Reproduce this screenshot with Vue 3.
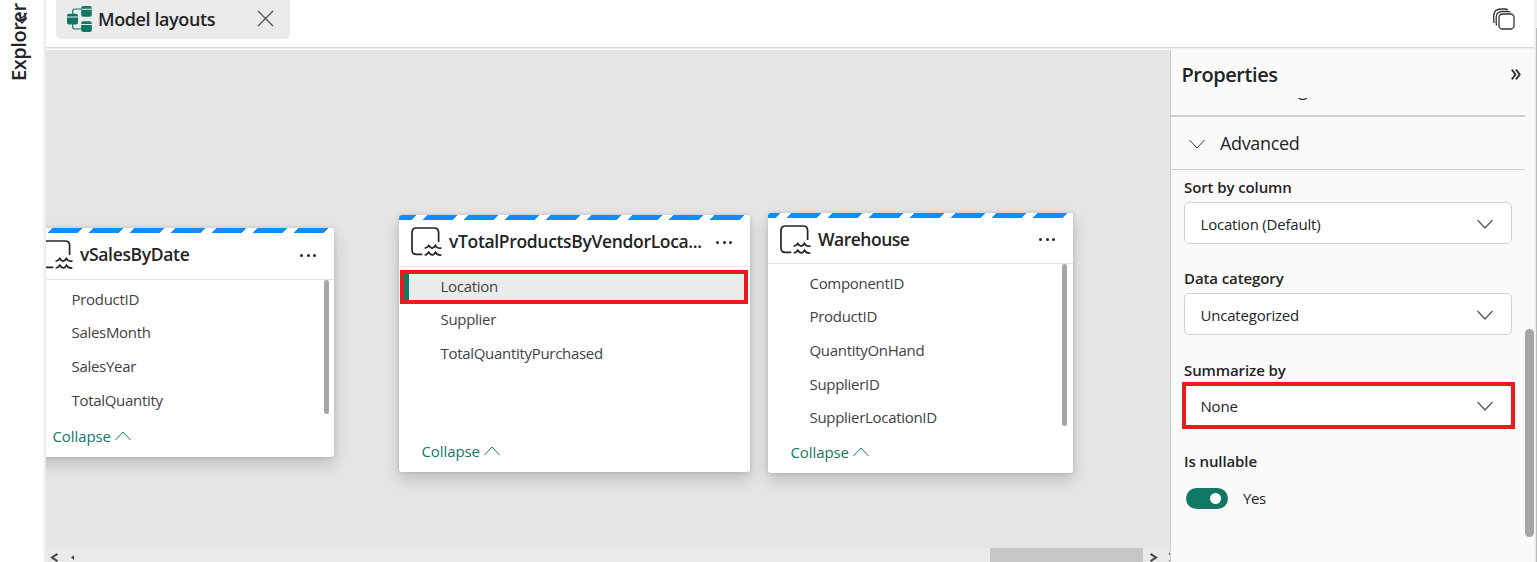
<script setup>
const tables = [
  { key: 'sales', name: 'vSalesByDate', columns: ['ProductID', 'SalesMonth', 'SalesYear', 'TotalQuantity'], scroll: true },
  { key: 'vendor', name: 'vTotalProductsByVendorLoca...', columns: ['Location', 'Supplier', 'TotalQuantityPurchased'], selected: 'Location' },
  { key: 'warehouse', name: 'Warehouse', columns: ['ComponentID', 'ProductID', 'QuantityOnHand', 'SupplierID', 'SupplierLocationID'], scroll: true },
]
const fields = [
  { label: 'Sort by column', value: 'Location (Default)' },
  { label: 'Data category', value: 'Uncategorized' },
  { label: 'Summarize by', value: 'None', marked: true },
]
</script>

<template>
  <div class="app">
    <aside class="rail">
      <span class="rail-label">Explorer</span>
      <svg class="rail-chevron" width="12" height="12" viewBox="0 0 12 12"><path d="M1 6l5 5 5-5M1 1l5 5 5-5" /></svg>
    </aside>
    <div class="main">
      <header class="topbar">
        <div class="tab">
          <svg class="model" width="25" height="26" viewBox="0 0 25 26">
            <path class="wire" d="M5.7 8V5.500q0-2.500 2.500-2.500H15M5.700 18v2.500q0 2.500 2.500 2.500H15" />
            <path d="M0 9.800q0-2 2-2h7q2 0 2 2v.7H0zM0 11.500h11v5q0 2-2 2H2q-2 0-2-2zM14.200 2q0-2 2-2h6.600q2 0 2 2v.7H14.200zM14.200 3.700h10.600v5q0 2-2 2h-6.600q-2 0-2-2zM14.200 17.300q0-2 2-2h6.600q2 0 2 2v.7H14.200zM14.200 19h10.600v5q0 2-2 2h-6.600q-2 0-2-2z" />
          </svg>
          <span class="tab-name">Model layouts</span>
          <svg class="close" width="17" height="17" viewBox="0 0 17 17"><path d="M1 1l15 15M16 1L1 16" /></svg>
        </div>
        <svg class="copies" width="22" height="22" viewBox="0 0 22 22">
          <rect x="6" y="6" width="15" height="15" rx="3.600" />
          <path d="M3.500 17.500Q3.200 16 3.200 14V9.500q0-6 6-6h4.300q2.500 0 4 .5M1 15Q.7 13.500.7 12V8.500Q.7 1 8.200 1h3.300q2.300 0 3.500.8" />
        </svg>
      </header>
      <div class="body">
        <section class="canvas">
          <article v-for="t in tables" :key="t.key" class="card" :class="t.key">
            <div class="stripe"></div>
            <div class="card-head">
              <svg class="lake" width="32" height="30" viewBox="0 0 32 30">
                <path d="M27.600 15V5.500q0-4.500-4.500-4.500H5.500Q1 1 1 5.500v17.200q0 4.700 4.500 4.700h5.800" />
                <path d="M13.600 21.200q2.500 0 4.200-2.700 2.200 3.600 4.700 2.100 1.200-.7 1.900-2.100 2 3.200 4.200 2.600M13.600 28q2.500 0 4.200-2.700 2.200 3.600 4.700 2.100 1.200-.7 1.900-2.100 2.200 3.400 6 2.700M28.600 21.100h1.900" />
              </svg>
              <span class="card-name">{{ t.name }}</span>
              <span class="more"><i></i><i></i><i></i></span>
            </div>
            <div class="columns">
              <div v-for="c in t.columns" :key="c" class="column" :class="{ selected: c === t.selected }"><span>{{ c }}</span></div>
              <div v-if="t.scroll" class="card-scroll"></div>
            </div>
            <div class="collapse">
              <span>Collapse</span>
              <svg width="16" height="10" viewBox="0 0 16 10"><path d="M.5 9L8 1l7.500 8" /></svg>
            </div>
          </article>
          <div class="hscroll">
            <svg class="arrow-left" width="9" height="9" viewBox="0 0 9 9"><path d="M7.500.8L2 4.500l5.500 3.700" /></svg>
            <svg class="tick" width="3" height="5" viewBox="0 0 3 5"><path d="M3 0v5L0 2.500z" /></svg>
            <div class="hthumb"></div>
            <svg class="arrow-right" width="9" height="9" viewBox="0 0 9 9"><path d="M1.500.8L7 4.500 1.500 8.200" /></svg>
            <div class="dots"></div>
          </div>
        </section>
        <aside class="props">
          <div class="props-head">
            <h2>Properties</h2>
            <svg width="10" height="11" viewBox="0 0 10 11"><path d="M.8.6l3.700 4.900L.8 10.400M5 .6l3.700 4.900L5 10.400" /></svg>
          </div>
          <div class="previous"><span>Formatting</span></div>
          <div class="advanced">
            <svg width="16" height="10" viewBox="0 0 16 10"><path d="M.5 1L8 9l7.500-8" /></svg>
            <span>Advanced</span>
          </div>
          <div v-for="f in fields" :key="f.label" class="field">
            <label>{{ f.label }}</label>
            <div class="select" :class="{ marked: f.marked }">
              <span>{{ f.value }}</span>
              <svg width="16" height="10" viewBox="0 0 16 10"><path d="M.5 1L8 9l7.500-8" /></svg>
            </div>
          </div>
          <div class="field">
            <label>Is nullable</label>
            <div class="toggle-row"><div class="toggle"><b></b></div><span>Yes</span></div>
          </div>
          <div class="vscroll"></div>
        </aside>
      </div>
    </div>
    <div class="edge"></div>
  </div>
</template>

<style>
body { overflow: hidden; background: #fff; }
</style>

<style scoped>
* { box-sizing: border-box; }
.app { display: flex; width: 1537px; height: 562px; overflow: hidden; font: 15px "Open Sans", "Noto Sans", sans-serif; color: #242424; background: #fff; }
svg { display: block; flex: none; fill: none; stroke: #333; overflow: visible; }
span, label, h2 { white-space: nowrap; }

.rail { position: relative; width: 46px; flex: none; background: linear-gradient(90deg, #fff 42px, #e8e8e8 46px); }
.rail-label { position: absolute; left: 4px; top: 2px; width: 29px; height: 79px; line-height: 29px; writing-mode: vertical-rl; transform: rotate(180deg); font-size: 20px; font-weight: 600; letter-spacing: -.45px; }
.rail-chevron { position: absolute; left: 16px; top: 12px; stroke-width: 1.300; }

.main { display: flex; flex-direction: column; width: 1488px; flex: none; }
.topbar { display: flex; justify-content: space-between; height: 50px; flex: none; padding: 0 19px 0 10px; background: linear-gradient(#fff 47px, #d8d8d8 47px 48px, #eee 48px 49px, #fafafa 49px); }
.tab { display: flex; align-items: center; width: 234px; height: 39px; padding-left: 11px; background: #ebebeb; border-radius: 0 0 5px 5px; }
.model { fill: #117865; stroke: none; margin-top: -1px; }
.model .wire { fill: none; stroke: #117865; stroke-width: 1.200; }
.tab-name { width: 159px; margin: -2px 0 0 6px; font-size: 18px; font-weight: 600; letter-spacing: -.4px; }
.close { stroke: #555; stroke-width: 1.400; margin-top: -3px; }
.copies { margin-top: 8px; stroke-width: 1.300; }

.body { display: flex; height: 512px; }
.canvas { position: relative; width: 1124px; height: 512px; overflow: hidden; background: #e5e5e5; }
.card { position: absolute; display: flex; flex-direction: column; background: #fff; border-radius: 3px; box-shadow: 0 7px 15px rgba(0,0,0,.18), 0 0 4px rgba(0,0,0,.12); }
.sales { left: -16px; top: 178px; width: 304px; height: 229px; }
.vendor { left: 353px; top: 165px; width: 351px; height: 257px; }
.warehouse { left: 722px; top: 163px; width: 305px; height: 260px; }
.stripe { height: 5px; flex: none; border-radius: 3px 3px 0 0; background: linear-gradient(135deg, #fff 3.540px, #118dff 3.540px 24.900px, #fff 24.900px) right top / 41px 5px repeat-x; }
.card-head { display: flex; align-items: center; height: 47px; flex: none; padding: 0 18px 0 12px; border-bottom: 1px solid #e3e3e3; }
.warehouse .card-head { height: 46px; }
.lake { stroke: #242424; stroke-width: 1.700; margin-top: -2px; }
.card-name { flex: 1; margin-left: 6px; font-size: 17.500px; font-weight: 600; letter-spacing: -.34px; margin-top: -4px; }
.warehouse .card-name { letter-spacing: -.5px; }
.more { display: flex; gap: 3.500px; margin-top: -2px; }
.more i { width: 3px; height: 3px; border-radius: 50%; background: #242424; }
.columns { position: relative; flex: 1; padding-top: 2.500px; }
.column { height: 33.700px; line-height: 33.700px; padding-left: 41.500px; color: #424242; font-size: 15px; letter-spacing: -.3px; }
.vendor .columns { padding-top: 3px; }
.vendor .column:not(.selected) span { position: relative; top: -1px; }
.selected { position: relative; height: 34px; margin: 0 2px 0 1px; padding-left: 36.500px; line-height: 25px; background: #ebebeb; border: 4px solid #e81c1c; box-shadow: inset 5px 0 #117865; }
.card-scroll { position: absolute; right: 5px; top: 0; width: 5px; height: 134px; border-radius: 3px; background: #a6a6a6; }
.warehouse .card-scroll { height: 162px; right: 6px; }
.collapse { display: flex; align-items: center; gap: 4px; height: 39px; padding: 0 0 3px 22.500px; color: #117865; letter-spacing: -.1px; }
.collapse svg { stroke: #117865; }
.hscroll { position: absolute; left: 0; right: 0; bottom: 0; height: 14px; display: flex; align-items: center; background: #eaeaea; padding-top: 4px; }
.hscroll svg { stroke: #444; stroke-width: 2; }
.arrow-left { margin-left: 4px; }
.hscroll .tick { margin-left: 12px; fill: #444; stroke: none; }
.hthumb { width: 153px; height: 14px; margin: -4px 0 0 916px; background: #c6c6c6; }
.arrow-right { margin-left: 6px; }
.dots { width: 1px; height: 8px; margin-left: auto; border-top: 2px solid #666; border-bottom: 1px solid #666; }

.props { position: relative; width: 364px; height: 512px; background: #fafafa; border-left: 1px solid #ccc; }
.props-head { display: flex; align-items: center; justify-content: space-between; height: 48px; padding: 1px 13px 0 10.500px; }
h2 { margin: 0; font-size: 20px; line-height: 48px; font-weight: 600; letter-spacing: -.45px; }
.props-head svg { stroke-width: 1.900; }
.previous { display: flex; align-items: flex-end; width: 354px; height: 19px; overflow: hidden; padding: 0 0 14px 49px; border-bottom: 2px solid #ccc; font-size: 18px; line-height: 24px; letter-spacing: -.5px; }
.advanced { display: flex; align-items: center; width: 354px; height: 53px; padding: 0 0 1px 18px; gap: 15px; border-bottom: 1px solid #ccc; font-size: 18px; letter-spacing: -.35px; }
.advanced svg { margin-top: 2px; }
.field { height: 91.300px; padding: 4px 0 0 13px; }
.field label { display: block; height: 28px; line-height: 26px; font-weight: 600; font-size: 15px; letter-spacing: -.1px; }
.select { display: flex; align-items: center; justify-content: space-between; position: relative; width: 328px; height: 42px; padding: 1px 18px 0 15.500px; background: #fff; border: 1px solid #d1d1d1; border-radius: 5px; letter-spacing: -.2px; }
.select svg { stroke: #555; stroke-width: 1.200; }
.marked::after { content: ""; box-sizing: border-box; position: absolute; left: -3px; top: -4px; width: 333px; height: 47px; border: 4px solid #e81c1c; }
.toggle-row { display: flex; align-items: center; gap: 15px; height: 44px; padding: 1px 0 0 2px; letter-spacing: -.4px; }
.toggle { display: flex; align-items: center; justify-content: flex-end; width: 42px; height: 21px; padding-right: 7px; border-radius: 11px; background: #117865; }
.toggle b { width: 11px; height: 11px; border-radius: 50%; background: #fff; }
.vscroll { position: absolute; right: 0; top: 279px; width: 9px; height: 208px; border-radius: 5px; background: #a6a6a6; }
.edge { width: 3px; background: linear-gradient(#f0f0f0, #f0f0f0) left / 2px 100% no-repeat, linear-gradient(#f0f0f0 28px, #bbb 28px); }
</style>
